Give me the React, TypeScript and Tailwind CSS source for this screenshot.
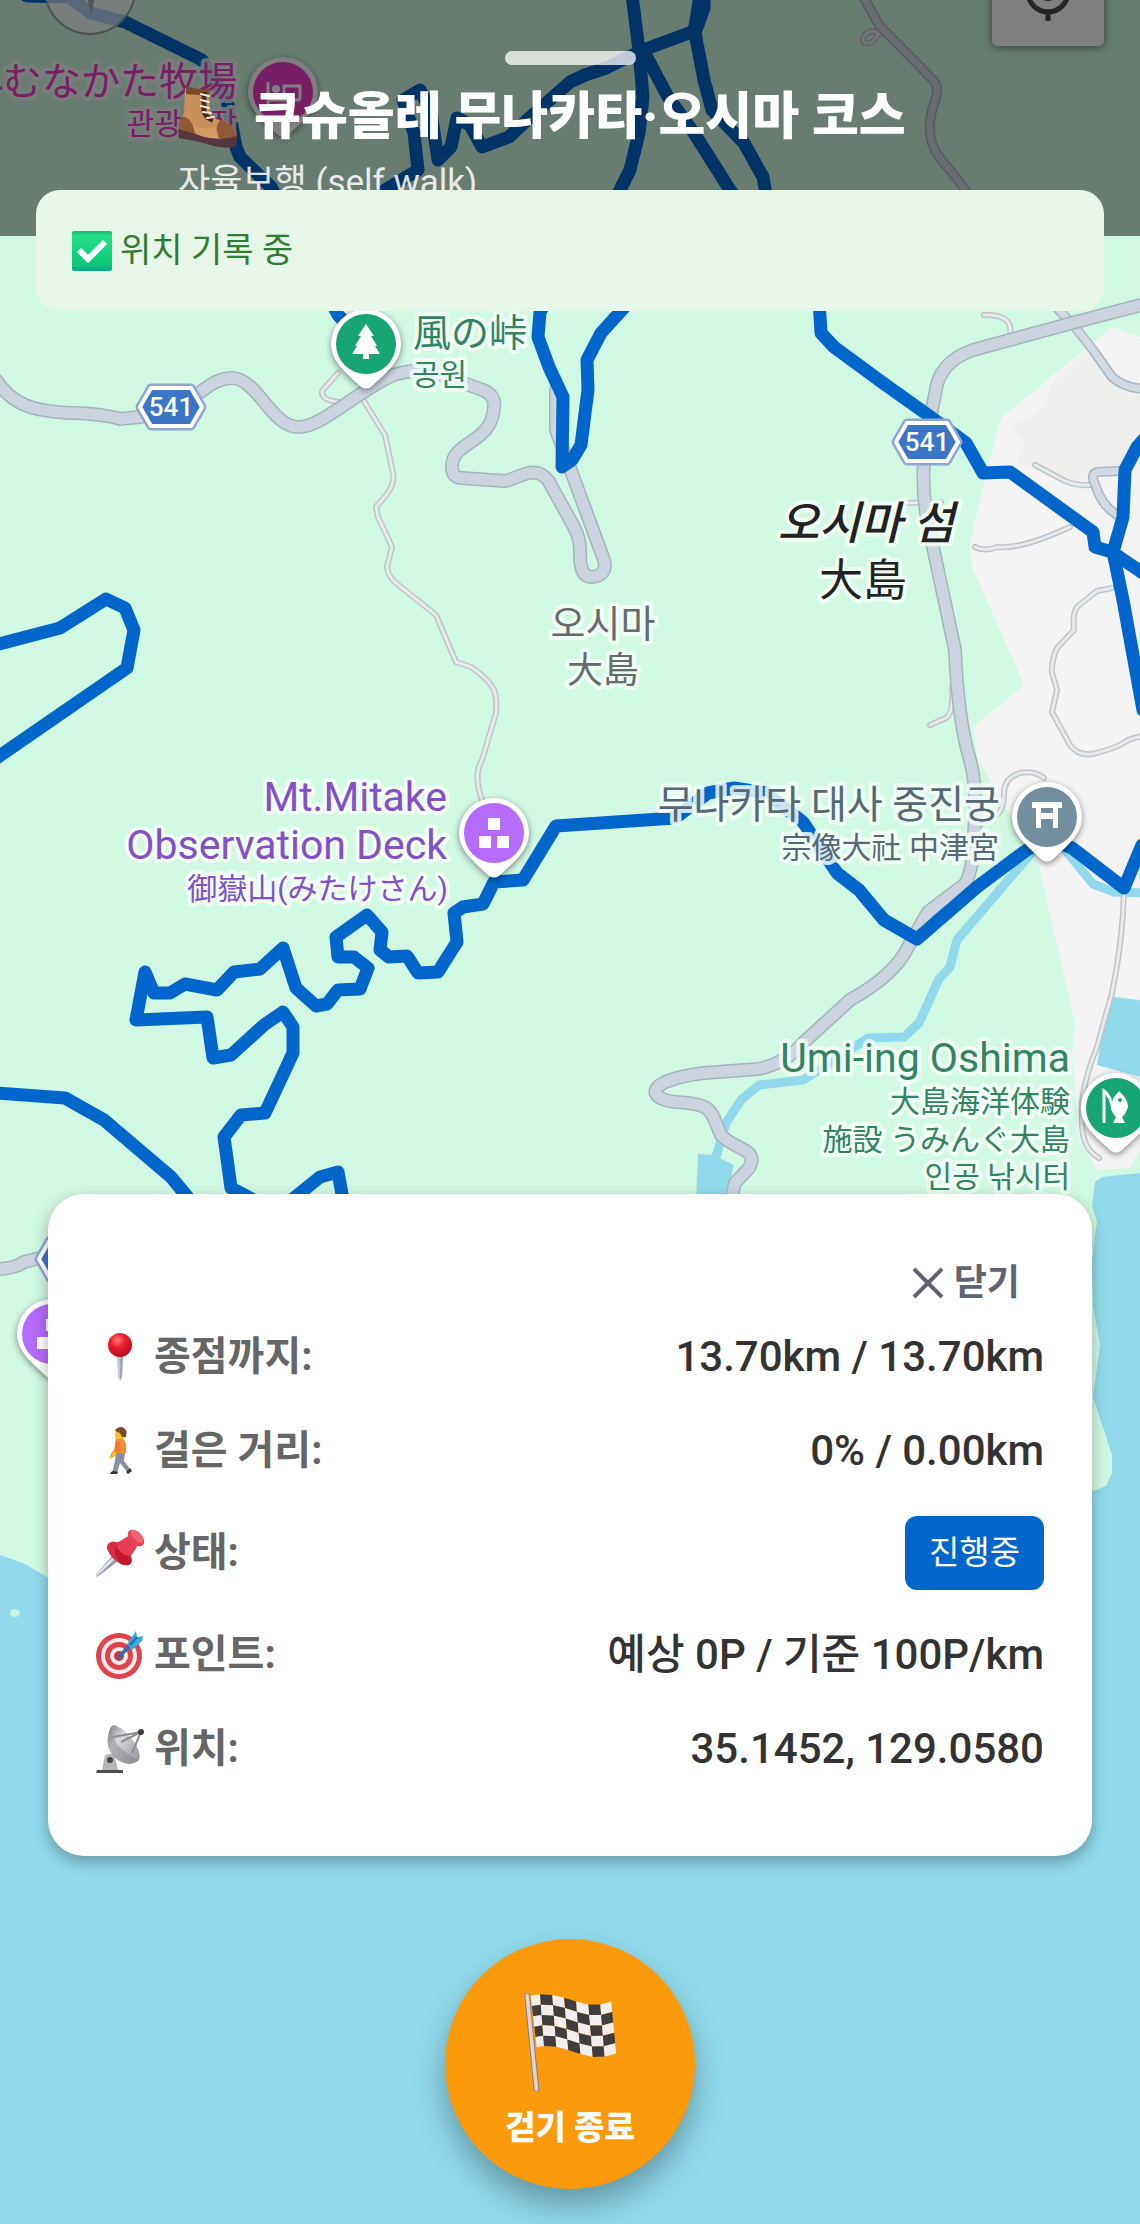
import React from "react";

const FONT = "font-[Roboto,'Noto_Sans_CJK_KR',sans-serif]";

/* ---------- Map data ---------- */

const TRAILS = [
    "M-10 -30 L27 -4 L69 -3 L91 13 L125 22 L202 60 L227 100 L236 147 L240 157 L271 187 L338 315 L366 344",
    "M340 230 L385 190 L418 170 L414 133 L403 100 L420 90 L431 112 L438 160 L451 147 L457 118 L470 125 L482 147 L509 137 L527 120 L570 82 L585 75 L606 68 L643 50",
    "M632 -5 L639 50 L643 97 L639 133 L630 170 L619 192 L570 260 L540 312 L538 337 L549 367 L563 397 L562 467 L572 460 L581 445 L588 390 L587 360 L601 333 L621 311 L650 280",
    "M700 -5 L695 27 L692 32 L643 50 L668 97 L694 133 L730 190 L819 300 L821 333 L834 347 L883 383 L928 415 L966 443 L983 473 L1010 472 L1093 532 L1095 547 L1112 552 L1150 578",
    "M704 -5 L704 8 L695 33 L704 80 L712 110 L744 143 L763 177 L766 195",
    "M1145 438 L1137 447 L1125 470 L1123 517 L1113 552 L1123 600 L1143 710",
    "M-5 645 L60 628 L106 599 L125 608 L134 630 L127 668 L-5 759",
    "M-5 1093 L65 1098 L104 1120 L171 1177 L190 1200",
    "M254 1200 L231 1188 L224 1137 L241 1115 L265 1113 L293 1053 L293 1027 L283 1012 L264 1025 L231 1055 L213 1058 L207 1017 L136 1020 L145 972 L154 993 L170 993 L185 984 L217 990 L234 972 L260 969 L283 948 L296 988 L316 1006 L327 1004 L338 990 L360 989 L368 968 L354 957 L338 957 L336 937 L367 915 L382 932 L380 950 L389 957 L407 956 L418 973 L438 972 L457 942 L454 913 L463 907 L483 904 L494 882 L523 880 L556 826 L675 818 L708 793 L734 788 L766 793 L803 822 L837 873 L859 890 L884 920 L917 939 L977 887 L1024 852 L1046 837 L1072 848 L1124 888 L1142 845",
    "M294 1198 L320 1177 L338 1172 L343 1200",
];

const ROADS = [
    "M-4 380 Q8 398 25 405 T73 413 T120 419 L150 416 C200 404 205 378 233 378 C258 380 272 427 298 427 C322 427 352 395 393 375 Q420 366 447 377 L480 389 Q496 394 494 407 C492 445 452 440 452 467 Q452 478 462 478 L505 481 C520 478 534 464 548 480 L574 527 Q581 540 580 555 Q580 577 592 577 Q608 575 604 560 L577 487 L556 430 L556 390",
    "M1145 304 L1072 323 L973 350 Q938 362 935 395 Q925 440 924 463 Q921 500 933 547 L955 650 Q958 720 970 760 Q978 790 974 833 Q974 868 965 884 L928 912 L908 947 Q895 975 850 1000 L803 1043 Q785 1064 758 1069 L704 1073 C645 1080 645 1099 676 1102 C716 1104 710 1112 721 1135 C734 1150 760 1148 749 1168 L735 1183 L731 1200",
    "M-4 1269 Q14 1269 24 1262 L70 1250",
];

const LANES = [
    "M863 -4 L879 25 L933 80 Q939 86 936 98 Q926 124 932 143 Q937 157 950 170 L1057 308 L1075 327 L1093 350 L1112 377 Q1124 388 1145 389",
    "M1121 471 L1097 472 Q1090 474 1095 484 Q1101 505 1117 515",
];

const PATHS = [
    "M879 25 Q880 38 870 43 Q860 44 864 36 Q870 28 880 34",
    "M338 373 L322 391 Q321 400 338 402",
    "M362 398 L385 435 L393 473 Q395 483 387 494 L376 507 L378 517 L392 547 L387 567 Q388 576 396 583 L436 615 L456 662 L471 667 C497 685 497 693 496 713 L482 760 Q473 775 482 800",
    "M984 315 Q1014 314 1010 335",
    "M1035 465 L1065 481 Q1077 486 1090 485",
    "M975 547 Q985 552 997 547 Q1020 550 1070 527",
    "M1112 588 L1097 591 L1078 606 Q1072 612 1074 630 L1057 648 Q1051 662 1052 673 L1057 690 L1052 712 L1070 745 Q1078 756 1092 754 Q1118 748 1128 740 L1145 735",
    "M952 687 Q954 712 946 718 L930 725",
    "M906 503 L941 502",
    "M1044 778 Q1034 770 1020 773 Q1004 778 1004 793 Q1004 808 998 814 L977 827",
    "M1124 890 Q1123 940 1112 993 L1097 1047 Q1080 1090 1082 1115 Q1080 1148 1099 1158",
];

interface PlaceLabelProps {
    x: number;
    y: number;
    size: number;
    color: string;
    anchor?: "start" | "middle" | "end";
    weight?: number;
    italic?: boolean;
    halo?: string;
    children: string;
}

const PlaceLabel = ({ x, y, size, color, anchor = "end", weight = 400, italic, halo = "#f4fdf8", children }: PlaceLabelProps) => (
    <text
        x={x}
        y={y}
        fontSize={size}
        fontWeight={weight}
        fontStyle={italic ? "italic" : "normal"}
        textAnchor={anchor}
        fill={color}
        stroke={halo}
        strokeOpacity={0.85}
        strokeWidth={8}
        strokeLinejoin="round"
        paintOrder="stroke"
    >
        {children}
    </text>
);

const MapPin = ({ x, y, color, children }: { x: number; y: number; color: string; children?: React.ReactNode }) => (
    <g transform={`translate(${x} ${y})`}>
        <path
            d="M0 -35 A35 35 0 0 1 35 0 C35 13 27 22 18 31 L5 43 Q0 46 -5 43 L-18 31 C-27 22 -35 13 -35 0 A35 35 0 0 1 0 -35 Z"
            fill="#fff"
            className="drop-shadow-[0_2px_3px_rgba(0,0,0,0.45)]"
        />
        <circle r={30} fill={color} />
        {children}
    </g>
);

const RouteShield = ({ x, y }: { x: number; y: number }) => (
    <g transform={`translate(${x} ${y})`} strokeLinejoin="round">
        <path d="M-20 -19 H20 L31 0 L20 19 H-20 L-31 0 Z" fill="#8fa6cf" stroke="#8fa6cf" strokeWidth={9} />
        <path d="M-20 -19 H20 L31 0 L20 19 H-20 L-31 0 Z" fill="#3b76c6" stroke="#fff" strokeWidth={4} />
        <text y={9} textAnchor="middle" fontSize={26} fontWeight={500} fill="#fff">
            541
        </text>
    </g>
);

const ThreeSquares = () => (
    <path d="M-6 -15 h12 v12 h-12 Z M-15 3 h12 v12 h-12 Z M3 3 h12 v12 h-12 Z" fill="#fff" />
);

const CourseMap = () => (
    <svg
        viewBox="0 0 1140 2224"
        preserveAspectRatio="xMidYMin slice"
        className="absolute inset-0 h-full w-full"
        role="img"
        aria-label="코스 지도"
    >
        <rect width={1140} height={2224} fill="#90daeb" />
        {/* Land */}
        <path
            d="M0 0 H1140 V1173 L1102 1177 L1095 1182 L1092 1206 L1097 1221 L1092 1260 L1093 1306 L1100 1345 L1093 1397 L1112 1455 L1112 1473 L1106 1486 L1093 1491 L900 1560 L300 1640 L47 1577 L25 1564 L0 1555 Z"
            fill="#d1f8e2"
        />
        <ellipse cx={15} cy={1613} rx={5} ry={4} fill="#c9f5dc" />
        <path
            d="M1112 327 L1140 337 V1150 L1130 1168 L1097 1170 L1079 1140 L1072 1057 L1075 1023 L1039 867 L977 757 L973 727 L1024 685 L972 567 L970 543 L984 483 L1001 418 Z"
            fill="#f3f3f4"
        />
        <path d="M1090 345 L1112 385 L1140 396 V440 L1120 470 L1095 470 L1078 486 L1035 464 L1017 465 L1024 443 L1012 428 L1043 408 L1052 384 Z" fill="#eeeeed" />
        <path d="M1108 996 L1145 1001 V1078 L1097 1065 Z" fill="#90daeb" />
        <path d="M698 1154 L713 1155 L734 1165 L725 1200 H696 Z" fill="#90daeb" />
        {/* Streams */}
        <g fill="none" stroke="#90daeb" strokeWidth={9}>
            <path d="M1034 850 L957 940 L950 967 L939 979 L919 1023 L904 1037 L868 1038 L832 1062 L803 1080 L759 1085 L741 1100 L726 1123 L715 1160" />
            <path d="M1061 845 L1093 884 L1114 892 L1145 893" />
        </g>
        {/* Roads */}
        <g fill="none" strokeLinecap="round" strokeLinejoin="round">
            {PATHS.map((d) => <path key={d} d={d} stroke="#bfc4c8" strokeWidth={6} />)}
            {PATHS.map((d) => <path key={d} d={d} stroke="#e6ebec" strokeWidth={3} />)}
            {LANES.map((d) => <path key={d} d={d} stroke="#a9b5bf" strokeWidth={10} />)}
            {LANES.map((d) => <path key={d} d={d} stroke="#d3dae3" strokeWidth={7} />)}
            {ROADS.map((d) => <path key={d} d={d} stroke="#a6b3bd" strokeWidth={14} />)}
            {ROADS.map((d) => <path key={d} d={d} stroke="#cbd4df" strokeWidth={11} />)}
            {TRAILS.map((d) => <path key={d} d={d} stroke="#0066cc" strokeWidth={13} />)}
        </g>

        <RouteShield x={171} y={407} />
        <RouteShield x={927} y={442} />
        <RouteShield x={70} y={1259} />

        {/* Map controls */}
        <circle cx={90} cy={-11} r={45} fill="#fff" fillOpacity={0.7} stroke="#9aa" strokeWidth={2} />
        <path d="M86 -10 L91 16 L96 -10 Z" fill="#aaa" />
        <rect x={992} y={-60} width={112} height={106} rx={5} fill="#fff" className="drop-shadow-[0_1px_4px_rgba(0,0,0,0.5)]" />
        <g fill="none" stroke="#4a4a4a" strokeWidth={5}>
            <circle cx={1048} cy={-8} r={20} />
            <path d="M1048 12 V21" />
        </g>
        <circle cx={1048} cy={-8} r={9} fill="#4a4a4a" />

        <MapPin x={283} y={92} color="#f03cc8">
            <path d="M-15 -10 V13 M-15 8 H17 M17 8 V-6 H1 V8" fill="none" stroke="#fff" strokeWidth={3} />
            <circle cx={-7} cy={-3} r={4} fill="#fff" />
        </MapPin>
        <MapPin x={366} y={344} color="#17a673">
            <path d="M0 -20 L8 -8 H5 L11 2 H9 L14 10 H3 V15 H-3 V10 H-14 L-9 2 H-11 L-5 -8 H-8 Z" fill="#fff" />
        </MapPin>
        <MapPin x={494} y={833} color="#b56bfb">
            <ThreeSquares />
        </MapPin>
        <MapPin x={52} y={1334} color="#b56bfb">
            <ThreeSquares />
        </MapPin>
        <MapPin x={1047} y={817} color="#738f9d">
            <path d="M-15 -15 H15 V-9 H11 V11 H6 V2 H-6 V11 H-11 V-9 H-15 Z M-6 -9 V-4 H6 V-9 Z" fill="#fff" fillRule="evenodd" />
        </MapPin>
        <MapPin x={1116} y={1108} color="#17a673">
            <path d="M-12 15 V-17 Q-5 -12 -3 2" fill="none" stroke="#fff" strokeWidth={3} />
            <path d="M3 -17 Q12 -9 12 -1 Q10 6 6 9 L9 15 H-3 L0 9 Q-5 4 -5 -1 Q-5 -9 3 -17 Z" fill="#fff" />
            <circle cx={4} cy={-8} r={2} fill="#17a673" />
        </MapPin>

        <path d="M0 88 H2" stroke="#e83cc0" strokeWidth={3} />
        <PlaceLabel x={237} y={95} size={39} color="#f03cc8">むなかた牧場</PlaceLabel>
        <PlaceLabel x={237} y={134} size={30} color="#f03cc8">관광목장</PlaceLabel>
        <PlaceLabel x={413} y={346} size={38} color="#338463" anchor="start">風の峠</PlaceLabel>
        <PlaceLabel x={412} y={385} size={30} color="#338463" anchor="start">공원</PlaceLabel>
        <PlaceLabel x={866} y={539} size={45} color="#222" weight={500} anchor="middle" italic>오시마 섬</PlaceLabel>
        <PlaceLabel x={863} y={596} size={44} color="#222" anchor="middle">大島</PlaceLabel>
        <PlaceLabel x={603} y={637} size={38} color="#666b6e" anchor="middle">오시마</PlaceLabel>
        <PlaceLabel x={603} y={683} size={36} color="#666b6e" anchor="middle">大島</PlaceLabel>
        <PlaceLabel x={447} y={811} size={41} color="#8350c8">Mt.Mitake</PlaceLabel>
        <PlaceLabel x={447} y={859} size={41} color="#8350c8">Observation Deck</PlaceLabel>
        <PlaceLabel x={448} y={899} size={30} color="#8350c8">御嶽山(みたけさん)</PlaceLabel>
        <PlaceLabel x={1000} y={818} size={39} color="#566873">무나카타 대사 중진궁</PlaceLabel>
        <PlaceLabel x={999} y={858} size={30} color="#566873">宗像大社 中津宮</PlaceLabel>
        <PlaceLabel x={1070} y={1072} size={41} color="#338463">Umi-ing Oshima</PlaceLabel>
        <PlaceLabel x={1070} y={1112} size={30} color="#338463">大島海洋体験</PlaceLabel>
        <PlaceLabel x={1070} y={1150} size={30} color="#338463">施設 うみんぐ大島</PlaceLabel>
        <PlaceLabel x={1070} y={1187} size={30} color="#338463">인공 낚시터</PlaceLabel>
    </svg>
);

/* ---------- Icons ---------- */

const BootIcon = () => (
    <svg viewBox="0 0 60 64" className="h-16 w-15 shrink-0" aria-hidden="true">
        <path d="M7 3 L31 6 L32 28 Q35 34 42 35 Q58 38 59 54 L50 58 L1 48 Q1 36 6 28 Z" fill="#c8905a" />
        <path d="M8 1 Q20 6 32 3 L31 11 L8 9 Z" fill="#7a4a27" />
        <path d="M3 32 Q10 30 15 41 L18 51 L1 48 Q0 38 3 32 Z M42 35 Q58 38 59 55 L40 53 Q36 44 42 35 Z" fill="#8f5837" />
        <path d="M15 41 Q26 45 38 42 L41 54 L18 51 Z" fill="#d39b62" />
        <path d="M0 44 L18 49 L26 52 Q42 56 59 51 L58 61 Q50 64 36 61 L22 57 L17 56 L1 53 Z" fill="#553640" />
        <path d="M26 7 V26 Q28 33 35 35" fill="none" stroke="#3d2a22" strokeWidth={5} />
        <path d="M23 9 L31 11 M23 15 L31 17 M23 21 L31 23 M25 27 L33 28 M29 33 L36 32" stroke="#f2ead9" strokeWidth={2} strokeLinecap="round" />
    </svg>
);

const CheckIcon = () => (
    <svg viewBox="0 0 40 40" className="size-10 shrink-0" aria-hidden="true">
        <defs>
            <linearGradient id="check-bg" x1="0" y1="0" x2="0" y2="1">
                <stop offset="0" stopColor="#12b86b" />
                <stop offset="0.12" stopColor="#22de86" />
                <stop offset="0.85" stopColor="#08c877" />
                <stop offset="1" stopColor="#04a68c" />
            </linearGradient>
        </defs>
        <rect width={40} height={40} rx={2} fill="url(#check-bg)" />
        <path d="M7 19 L16 28 L33 11" fill="none" stroke="#fff" strokeWidth={6} />
    </svg>
);

const RoundPinIcon = () => (
    <svg viewBox="0 0 48 48" className="size-12" aria-hidden="true">
        <defs>
            <radialGradient id="pin-ball" cx="0.4" cy="0.3" r="0.7">
                <stop offset="0" stopColor="#ff7a7a" />
                <stop offset="0.45" stopColor="#ea1c2c" />
                <stop offset="1" stopColor="#b80d1d" />
            </radialGradient>
        </defs>
        <path d="M21 22 H27 L26 44 L24 48 L22 44 Z" fill="#c6c8d2" />
        <path d="M24 22 H27 L26 44 L24 48 Z" fill="#a5a7b4" />
        <circle cx={24} cy={12} r={12} fill="url(#pin-ball)" />
    </svg>
);

const WalkerIcon = () => (
    <svg viewBox="0 0 48 48" className="size-12" aria-hidden="true">
        <path d="M20 25 L29 25 L28 34 L35 43 L32 46 L24 36 L21 46 H16 L19 34 Z" fill="#8c8f9d" />
        <path d="M14 47 Q15 44 18 44 L22 45 L21 47 Z M30 45 L34 41 L36 44 L32 47 Z" fill="#33343b" />
        <path d="M20 4 Q26 2 29 6 L28 12 H20 Q18 10 20 4 Z" fill="#fbc02d" />
        <path d="M19 4 Q20 0 26 0 Q32 2 30 10 L26 10 L24 6 Z" fill="#7b4a26" />
        <path d="M20 12 H27 Q31 15 30 26 H20 Q18 18 20 12 Z" fill="#f58a3c" />
        <path d="M22 15 L20 24 L16 29" fill="none" stroke="#ee7a2a" strokeWidth={4} />
        <path d="M19 26 L15 30" stroke="#fbc02d" strokeWidth={3} strokeLinecap="round" />
    </svg>
);

const PushPinIcon = () => (
    <svg viewBox="0 0 48 48" className="size-12" aria-hidden="true">
        <path d="M16 27 L22 32 L4 46 L0 48 L1 44 Z" fill="#9a9ca6" />
        <path d="M17 28 L19 30 L1 47 L2 43 Z" fill="#e4e5ea" />
        <path d="M12 15 Q20 9 30 20 Q40 32 33 36 Q26 38 17 29 Q9 20 12 15 Z" fill="#c4162f" />
        <path d="M19 15 L34 6 L43 14 L35 27 Q26 28 19 15 Z" fill="#e83c52" />
        <path d="M12 15 Q17 10 24 15 Q18 17 19 24 Q20 29 26 34 Q21 33 17 29 Q9 20 12 15 Z" fill="#dc2942" />
        <ellipse cx={40} cy={9} rx={10} ry={6} transform="rotate(45 40 9)" fill="#e4435a" />
        <ellipse cx={41} cy={7} rx={8} ry={4} transform="rotate(45 41 7)" fill="#ee6577" />
    </svg>
);

const TargetIcon = () => (
    <svg viewBox="0 0 48 48" className="size-12" aria-hidden="true">
        <circle cx={23} cy={25} r={23} fill="#e0424d" />
        <circle cx={23} cy={25} r={18} fill="#f7eced" />
        <circle cx={23} cy={25} r={14} fill="#e0424d" />
        <circle cx={23} cy={25} r={9} fill="#f7eced" />
        <circle cx={23} cy={25} r={5} fill="#d92f3c" />
        <path d="M23 26 L37 11" stroke="#2f6ea8" strokeWidth={4} strokeLinecap="round" />
        <path d="M31 13 L40 0 L41 6 L47 5 L46 10 L36 19 Z" fill="#36a9dd" />
        <path d="M34 14 L41 6" stroke="#1f6fae" strokeWidth={2} />
    </svg>
);

const AntennaIcon = () => (
    <svg viewBox="0 0 48 48" className="size-12" aria-hidden="true">
        <defs>
            <linearGradient id="dish" x1="0" y1="0" x2="1" y2="1">
                <stop offset="0" stopColor="#77797d" />
                <stop offset="0.35" stopColor="#d8d9dc" />
                <stop offset="1" stopColor="#8e9094" />
            </linearGradient>
        </defs>
        <path d="M9 30 L18 28 L22 45 H6 Z" fill="#b4b6ba" />
        <circle cx={14} cy={35} r={3} fill="#44464b" />
        <path d="M1 45 H27 V48 H0 Z" fill="#4c4e53" />
        <path d="M18 0 Q28 3 36 14 Q46 27 43 35 Q34 43 22 35 Q8 25 13 7 Q14 1 18 0 Z" fill="url(#dish)" />
        <path d="M16 3 Q14 20 42 35 Q32 41 22 35 Q8 25 13 7 Z" fill="#808287" fillOpacity={0.45} />
        <path d="M17 12 L45 7 L36 28 M25 17 L45 7" fill="none" stroke="#8b8d92" strokeWidth={2} />
        <circle cx={45} cy={7} r={3} fill="#3b3d42" />
    </svg>
);

const FLAG_TOP = [[390, 288], [418, 284], [455, 286], [491, 294], [527, 306], [564, 315], [600, 315], [633, 306]];
const FLAG_BOTTOM = [[408, 444], [430, 440], [467, 442], [503, 452], [540, 464], [577, 473], [613, 472], [648, 463]];

const flagPoint = (col: number, row: number) => {
    const [x1, y1] = FLAG_TOP[col];
    const [x2, y2] = FLAG_BOTTOM[col];
    return `${x1 + ((x2 - x1) * row) / 5},${y1 + ((y2 - y1) * row) / 5}`;
};

const CheckeredFlag = () => (
    <svg viewBox="370 280 280 296" className="h-[98px] w-[93px]" aria-hidden="true">
        {[0, 1, 2, 3, 4].map((row) =>
            [0, 1, 2, 3, 4, 5, 6].map((col) => (
                <polygon
                    key={`${row}-${col}`}
                    points={[flagPoint(col, row), flagPoint(col + 1, row), flagPoint(col + 1, row + 1), flagPoint(col, row + 1)].join(" ")}
                    fill={(row + col) % 2 ? "#403d3e" : "#f3eeee"}
                />
            ))
        )}
        <path d="M379 287 L407 570" stroke="#8b7c78" strokeWidth={17} strokeLinecap="round" />
        <path d="M379 287 L407 570" stroke="#e0d3d1" strokeWidth={11} strokeLinecap="round" />
    </svg>
);

/* ---------- Screen ---------- */

const ROWS = [
    { icon: <RoundPinIcon />, label: "종점까지:", value: "13.70km / 13.70km" },
    { icon: <WalkerIcon />, label: "걸은 거리:", value: "0% / 0.00km" },
    { icon: <PushPinIcon />, label: "상태:", value: "진행중", badge: true },
    { icon: <TargetIcon />, label: "포인트:", value: "예상 0P / 기준 100P/km" },
    { icon: <AntennaIcon />, label: "위치:", value: "35.1452, 129.0580" },
];

export default function App() {
    return (
        <div className={`relative flex min-h-screen flex-col overflow-hidden ${FONT}`} lang="ko">
            <CourseMap />

            {/* Course header */}
            <header className="relative bg-black/50 px-9 pt-[51px] pb-[27px]">
                <div className="mx-auto h-3.5 w-[131px] rounded-full bg-white/75" />
                <div className="mx-auto max-w-[784px]">
                    <h1 className="mt-4 flex items-center gap-4 text-[51px] leading-[72px] font-black text-white">
                        <BootIcon />
                        <span className="whitespace-nowrap">큐슈올레 무나카타·오시마 코스</span>
                    </h1>
                    <p className="mt-1 text-[35px] leading-[52px] text-white/85">자율보행 (self walk)</p>
                </div>
            </header>

            {/* Recording status */}
            <div
                role="status"
                className="relative mx-9 -mt-[46px] flex h-[121px] items-center gap-2 rounded-3xl bg-[#e8f5e9] px-9 text-[34px] text-[#2e7d32]"
            >
                <CheckIcon />
                위치 기록 중
            </div>

            <div className="flex-1" />

            {/* Walk details */}
            <section className="relative mx-12 rounded-[36px] bg-white px-12 pt-12 pb-[78px] shadow-[0_6px_16px_rgba(0,0,0,0.3)]">
                <div className="mb-1 flex justify-end">
                    <button type="button" className="flex h-[82px] items-center gap-2.5 px-6 text-[36px] font-bold text-[#5f6470]">
                        <svg viewBox="0 0 32 32" className="size-8" aria-hidden="true">
                            <path d="M2 2 L30 30 M30 2 L2 30" stroke="currentColor" strokeWidth={4} />
                        </svg>
                        닫기
                    </button>
                </div>
                <dl className="flex flex-col gap-9">
                    {ROWS.map((row) => (
                        <div key={row.label} className="flex items-center justify-between text-[40px] leading-[58px]">
                            <dt className="flex items-center gap-2.5 font-bold text-[#666]">
                                {row.icon}
                                {row.label}
                            </dt>
                            {row.badge ? (
                                <dd className="rounded-xl bg-[#0066cc] px-6 py-2 text-[33px] text-white">{row.value}</dd>
                            ) : (
                                <dd className="text-[42px] font-medium text-[#333]">{row.value}</dd>
                            )}
                        </div>
                    ))}
                </dl>
            </section>

            <button
                type="button"
                className="relative mx-auto mt-[83px] mb-[35px] flex size-[250px] flex-col items-center rounded-full bg-[#fb9a0a] pt-[54px] text-[33px] font-black text-white shadow-[0_16px_32px_rgba(0,0,0,0.3)]"
            >
                <CheckeredFlag />
                <span className="mt-3">걷기 종료</span>
            </button>
        </div>
    );
}
